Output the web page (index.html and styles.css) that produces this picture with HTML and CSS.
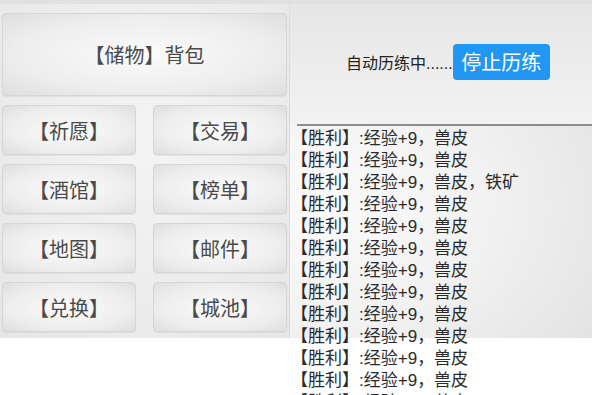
FILE: index.html
```html
<!DOCTYPE html>
<html lang="zh-CN">
<head>
    <meta charset="UTF-8">
    <meta name="viewport" content="width=device-width, initial-scale=1.0">
    <title>自动历练</title>
    <link rel="stylesheet" href="styles.css">
</head>
<body>
    <div class="screen">
        <div class="menu-panel">
            <button class="menu-btn menu-btn-wide">【储物】背包</button>
            <div class="menu-grid">
                <button class="menu-btn">【祈愿】</button>
                <button class="menu-btn">【交易】</button>
                <button class="menu-btn">【酒馆】</button>
                <button class="menu-btn">【榜单】</button>
                <button class="menu-btn">【地图】</button>
                <button class="menu-btn">【邮件】</button>
                <button class="menu-btn">【兑换】</button>
                <button class="menu-btn">【城池】</button>
            </div>
        </div>

        <div class="battle-panel">
            <div class="battle-header">
                <span class="status">自动历练中<span class="dots">......</span></span>
                <button class="stop-btn">停止历练</button>
            </div>
            <div class="divider"></div>
            <ul class="battle-log">
                <li>【胜利】<span class="latin">:</span>经验<span class="latin">+9</span>，兽皮</li>
                <li>【胜利】<span class="latin">:</span>经验<span class="latin">+9</span>，兽皮</li>
                <li>【胜利】<span class="latin">:</span>经验<span class="latin">+9</span>，兽皮，铁矿</li>
                <li>【胜利】<span class="latin">:</span>经验<span class="latin">+9</span>，兽皮</li>
                <li>【胜利】<span class="latin">:</span>经验<span class="latin">+9</span>，兽皮</li>
                <li>【胜利】<span class="latin">:</span>经验<span class="latin">+9</span>，兽皮</li>
                <li>【胜利】<span class="latin">:</span>经验<span class="latin">+9</span>，兽皮</li>
                <li>【胜利】<span class="latin">:</span>经验<span class="latin">+9</span>，兽皮</li>
                <li>【胜利】<span class="latin">:</span>经验<span class="latin">+9</span>，兽皮</li>
                <li>【胜利】<span class="latin">:</span>经验<span class="latin">+9</span>，兽皮</li>
                <li>【胜利】<span class="latin">:</span>经验<span class="latin">+9</span>，兽皮</li>
                <li>【胜利】<span class="latin">:</span>经验<span class="latin">+9</span>，兽皮</li>
                <li>【胜利】<span class="latin">:</span>经验<span class="latin">+9</span>，兽皮</li>
            </ul>
        </div>
    </div>
</body>
</html>
```

FILE: styles.css
```css
* {
    box-sizing: border-box;
    margin: 0;
    padding: 0;
}

body {
    font-family: "Noto Sans CJK SC", "Noto Sans", sans-serif;
    background: #fff;
    color: #333;
    overflow: hidden;
    height: 395px;
}

.screen {
    display: flex;
    height: 338px;
    background: #ebebeb;
    border-top: 4px solid #e0e0e0;
}

/* left menu */
.menu-panel {
    width: 289px;
    padding: 9px 2px 0;
    background: radial-gradient(ellipse at 50% 40%, #f4f4f4 0%, #ececec 60%, #e6e6e6 100%);
}

.menu-btn {
    font-family: inherit;
    font-size: 20px;
    color: #4a4a4a;
    height: 50px;
    border: 1px solid #d6d6d6;
    border-radius: 4px;
    background: radial-gradient(ellipse at center, #fbfbfb 0%, #ededed 65%, #dedede 100%);
    box-shadow: 0 1px 1px rgba(0, 0, 0, 0.06);
    cursor: pointer;
}

.menu-btn-wide {
    display: block;
    width: 285px;
    height: 83px;
    margin-bottom: 9px;
}

.menu-grid {
    display: grid;
    grid-template-columns: 134px 134px;
    column-gap: 17px;
    row-gap: 9px;
}

/* right side */
.battle-panel {
    flex: 1;
    display: flex;
    flex-direction: column;
    background: radial-gradient(ellipse at 10% 60%, #fbfbfb 0%, #f1f1f1 45%, #dedede 100%);
    border-left: 1px solid #dcdcdc;
}

.battle-header {
    flex-shrink: 0;
    display: flex;
    align-items: center;
    height: 120px;
    padding: 0 0 5px 56px;
    background: linear-gradient(#e6e6e6, #f2f2f2);
}

.divider {
    flex-shrink: 0;
    height: 2px;
    margin-left: 7px;
    background: #8c8c8c;
}

.status {
    font-size: 16px;
    color: #222;
}

.dots {
    font-family: "Liberation Sans", sans-serif;
}

.stop-btn {
    font-family: inherit;
    font-size: 20px;
    color: #fff;
    background: #2196f3;
    border: none;
    border-radius: 4px;
    width: 97px;
    height: 36px;
    cursor: pointer;
}

.battle-log {
    flex-shrink: 0;
    list-style: none;
    padding-left: 1px;
    font-size: 17px;
    color: #2a2a2a;
    white-space: nowrap;
}

.battle-log li {
    height: 22px;
    line-height: 22px;
}

.latin {
    font-family: "Liberation Sans", sans-serif;
}
```
